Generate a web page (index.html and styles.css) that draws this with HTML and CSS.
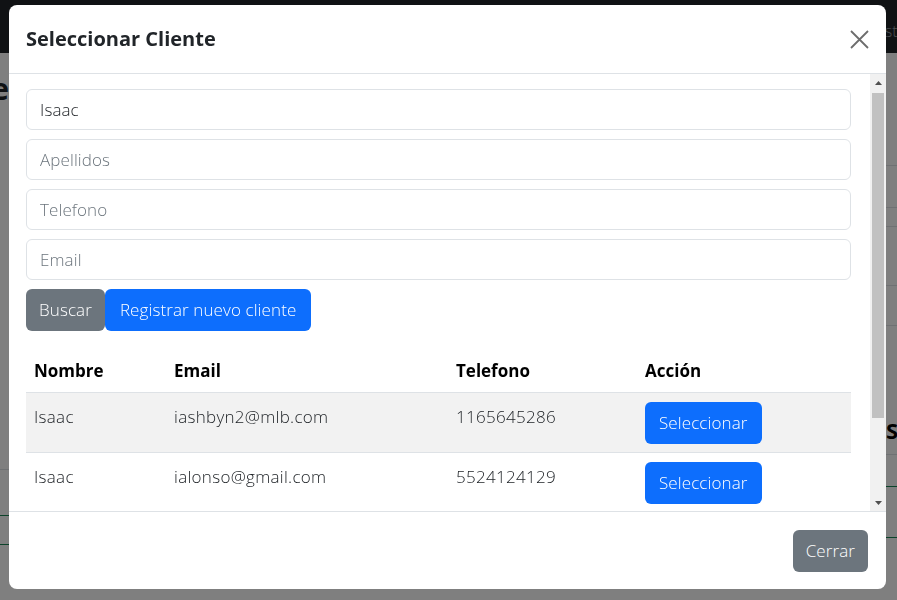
FILE: index.html
```html
<!DOCTYPE html>
<html lang="es">
<head>
<meta charset="utf-8">
<title>Seleccionar Cliente</title>
<link rel="stylesheet" href="styles.css">
</head>
<body>
<div class="page">
  <nav class="navbar">
    <span class="nav-text">Lista</span>
  </nav>
  <div class="page-main">
    <div class="strip strip-left">
      <div class="strip-inner">
        <h2 class="page-title">Cliente</h2>
        <div class="line line-gray line-l1"></div>
        <div class="line line-green line-l2"></div>
        <div class="line line-green line-l3"></div>
      </div>
    </div>
    <div class="strip strip-right">
      <div class="strip-inner-r">
        <div class="line line-gray r1"></div>
        <div class="line line-gray r2"></div>
        <div class="line line-gray r3"></div>
        <div class="line line-gray r4"></div>
        <div class="line line-gray r5"></div>
        <div class="page-sub">Servicios</div>
        <div class="line line-gray r6"></div>
        <div class="line line-green r7"></div>
        <div class="line line-green r8"></div>
      </div>
    </div>
  </div>
</div>

<div class="backdrop"></div>

<div class="modal">
  <div class="modal-content">
    <header class="modal-header">
      <h5 class="modal-title">Seleccionar Cliente</h5>
      <button class="btn-close" aria-label="Cerrar">
        <svg width="19" height="19" viewBox="0 0 19 19"><path d="M1 1 L18 18 M18 1 L1 18" stroke="#6d6d6d" stroke-width="1.8" fill="none"/></svg>
      </button>
    </header>
    <div class="modal-body">
      <div class="body-scroll">
        <div class="form-control">Isaac</div>
        <div class="form-control placeholder">Apellidos</div>
        <div class="form-control placeholder">Telefono</div>
        <div class="form-control placeholder">Email</div>
        <div class="btn-row">
          <button class="btn btn-secondary btn-search">Buscar</button>
          <button class="btn btn-primary btn-new">Registrar nuevo cliente</button>
        </div>
        <table class="table">
          <colgroup>
            <col class="c1"><col class="c2"><col class="c3"><col class="c4">
          </colgroup>
          <thead>
            <tr><th>Nombre</th><th>Email</th><th>Telefono</th><th>Acción</th></tr>
          </thead>
          <tbody>
            <tr class="striped"><td>Isaac</td><td>iashbyn2@mlb.com</td><td>1165645286</td><td class="act"><button class="btn btn-primary btn-sel">Seleccionar</button></td></tr>
            <tr><td>Isaac</td><td>ialonso@gmail.com</td><td>5524124129</td><td class="act"><button class="btn btn-primary btn-sel">Seleccionar</button></td></tr>
            <tr><td>Isaac</td><td>isaac.r@hotmail.com</td><td>5587412365</td><td class="act"><button class="btn btn-primary btn-sel">Seleccionar</button></td></tr>
          </tbody>
        </table>
      </div>
      <div class="scrollbar">
        <div class="sb-btn"><svg width="7" height="4" viewBox="0 0 7 4"><path d="M0 4 L3.5 0 L7 4 Z" fill="#505050"/></svg></div>
        <div class="sb-track"><div class="sb-thumb"></div></div>
        <div class="sb-btn"><svg width="7" height="4" viewBox="0 0 7 4"><path d="M0 0 L3.5 4 L7 0 Z" fill="#505050"/></svg></div>
      </div>
    </div>
    <footer class="modal-footer">
      <button class="btn btn-secondary btn-close-footer">Cerrar</button>
    </footer>
  </div>
</div>
</body>
</html>
```

FILE: styles.css
```css
* { box-sizing: border-box; }
html, body { margin: 0; padding: 0; height: 100%; }
body {
  font-family: "Open Sans", "Noto Sans", sans-serif;
  font-weight: 300;
  color: #212529;
  background: #ffffff;
  overflow: hidden;
}

/* ---------- background page ---------- */
.page { height: 600px; display: flex; flex-direction: column; }
.navbar {
  height: 53px;
  background: #212529;
  display: flex;
  justify-content: flex-end;
  align-items: center;
  padding-top: 8px;
  overflow: hidden;
}
.nav-text {
  color: #9ba0a5;
  font-size: 16px;
  white-space: nowrap;
  margin-right: -9px;
}
.page-main { flex: 1; display: flex; justify-content: space-between; }
.strip { overflow: hidden; }
.strip-left { width: 9px; }
.strip-right { width: 11px; }
.strip-inner { display: flex; flex-direction: column; align-items: flex-end; }
.strip-inner-r { display: flex; flex-direction: column; align-items: flex-start; }
.page-title {
  margin: 18px 0 0;
  font-family: "Open Sans", sans-serif;
  font-weight: 700;
  font-size: 30px;
  line-height: 36px;
  white-space: nowrap;
  color: #212529;
}
.page-sub {
  margin-top: 92px;
  font-weight: 700;
  font-size: 22px;
  line-height: 24px;
  white-space: nowrap;
  color: #000;
}
.line { height: 1px; width: 60px; flex: none; }
.line-gray { background: #dee2e6; }
.line-green { background: #198754; }
.line-l1 { margin-top: 362px; }
.line-l2 { margin-top: 45px; }
.line-l3 { margin-top: 28px; }
.r1 { margin-top: 112px; }
.r2 { margin-top: 41px; }
.r3 { margin-top: 18px; }
.r4 { margin-top: 58px; }
.r5 { margin-top: 39px; }
.r6 { margin-top: 12px; }
.r7 { margin-top: 31px; }
.r8 { margin-top: 50px; }

.backdrop {
  position: fixed;
  inset: 0;
  background: rgba(0, 0, 0, 0.5);
}

/* ---------- modal ---------- */
.modal {
  position: fixed;
  inset: 0;
  padding: 5px 11px 11px 9px;
}
.modal-content {
  height: 100%;
  background: #fff;
  border-radius: 8px;
  display: flex;
  flex-direction: column;
  overflow: hidden;
}
.modal-header {
  height: 69px;
  flex: none;
  border-bottom: 1px solid #dee2e6;
  display: flex;
  align-items: center;
  justify-content: space-between;
  padding: 0 17px 0 17px;
}
.modal-title {
  margin: 0;
  font-size: 20px;
  font-weight: 700;
  line-height: 30px;
  color: #212529;
  letter-spacing: 0;
}
.btn-close {
  border: 0;
  background: transparent;
  padding: 0;
  width: 19px;
  height: 19px;
  display: flex;
}

.modal-body {
  flex: 1;
  min-height: 0;
  display: flex;
}
.body-scroll {
  flex: 1;
  overflow: hidden;
  padding: 15px 19px 0 17px;
}
.form-control {
  height: 41px;
  border: 1px solid #dee2e6;
  border-radius: 6px;
  padding: 0 13px;
  display: flex;
  align-items: center;
  font-size: 17px;
  letter-spacing: 0.1px;
  color: #212529;
  margin-bottom: 9px;
}
.form-control.placeholder { color: #6c757d; }

.btn-row { display: flex; margin-top: 2px; }
.btn {
  font-family: inherit;
  font-weight: 300;
  font-size: 17px;
  letter-spacing: 0.1px;
  line-height: 24px;
  height: 42px;
  border: 0;
  border-radius: 6px;
  color: #fff;
  padding: 0 14px;
}
.btn-secondary { background: #6c757d; }
.btn-primary { background: #0d6efd; }
.btn-search { padding: 0 13px; }
.btn-new { padding: 0 15px; }
.btn-close-footer { padding: 0 13px; }

.table {
  width: 100%;
  border-collapse: collapse;
  margin-top: 18px;
  table-layout: fixed;
}
.c1 { width: 140px; }
.c2 { width: 282px; }
.c3 { width: 189px; }
.c4 { width: auto; }
.table th {
  text-align: left;
  font-weight: 700;
  font-size: 17px;
  line-height: 24px;
  padding: 10px 8px 9px;
  color: #000;
  border-bottom: 1px solid #dee2e6;
}
.table td {
  font-size: 17px;
  letter-spacing: 0.3px;
  line-height: 24px;
  padding: 12px 8px 5px;
  vertical-align: top;
  color: #212529;
  border-bottom: 1px solid #dee2e6;
}
.table td.act { padding: 9px 8px 8px; letter-spacing: 0; }
.table tr.striped td { background: #f2f2f2; }
.btn-sel { height: 42px; padding: 0 14px; }

/* fake scrollbar */
.scrollbar {
  width: 16px;
  flex: none;
  background: #f1f1f1;
  display: flex;
  flex-direction: column;
}
.sb-btn {
  height: 17px;
  flex: none;
  display: flex;
  align-items: center;
  justify-content: center;
}
.sb-track { flex: 1; padding: 2px 2px 0 2px; }
.sb-thumb { height: 325px; background: #c1c1c1; }

.modal-footer {
  height: 78px;
  flex: none;
  border-top: 1px solid #dee2e6;
  display: flex;
  justify-content: flex-end;
  align-items: center;
  padding: 0 18px;
}
```
